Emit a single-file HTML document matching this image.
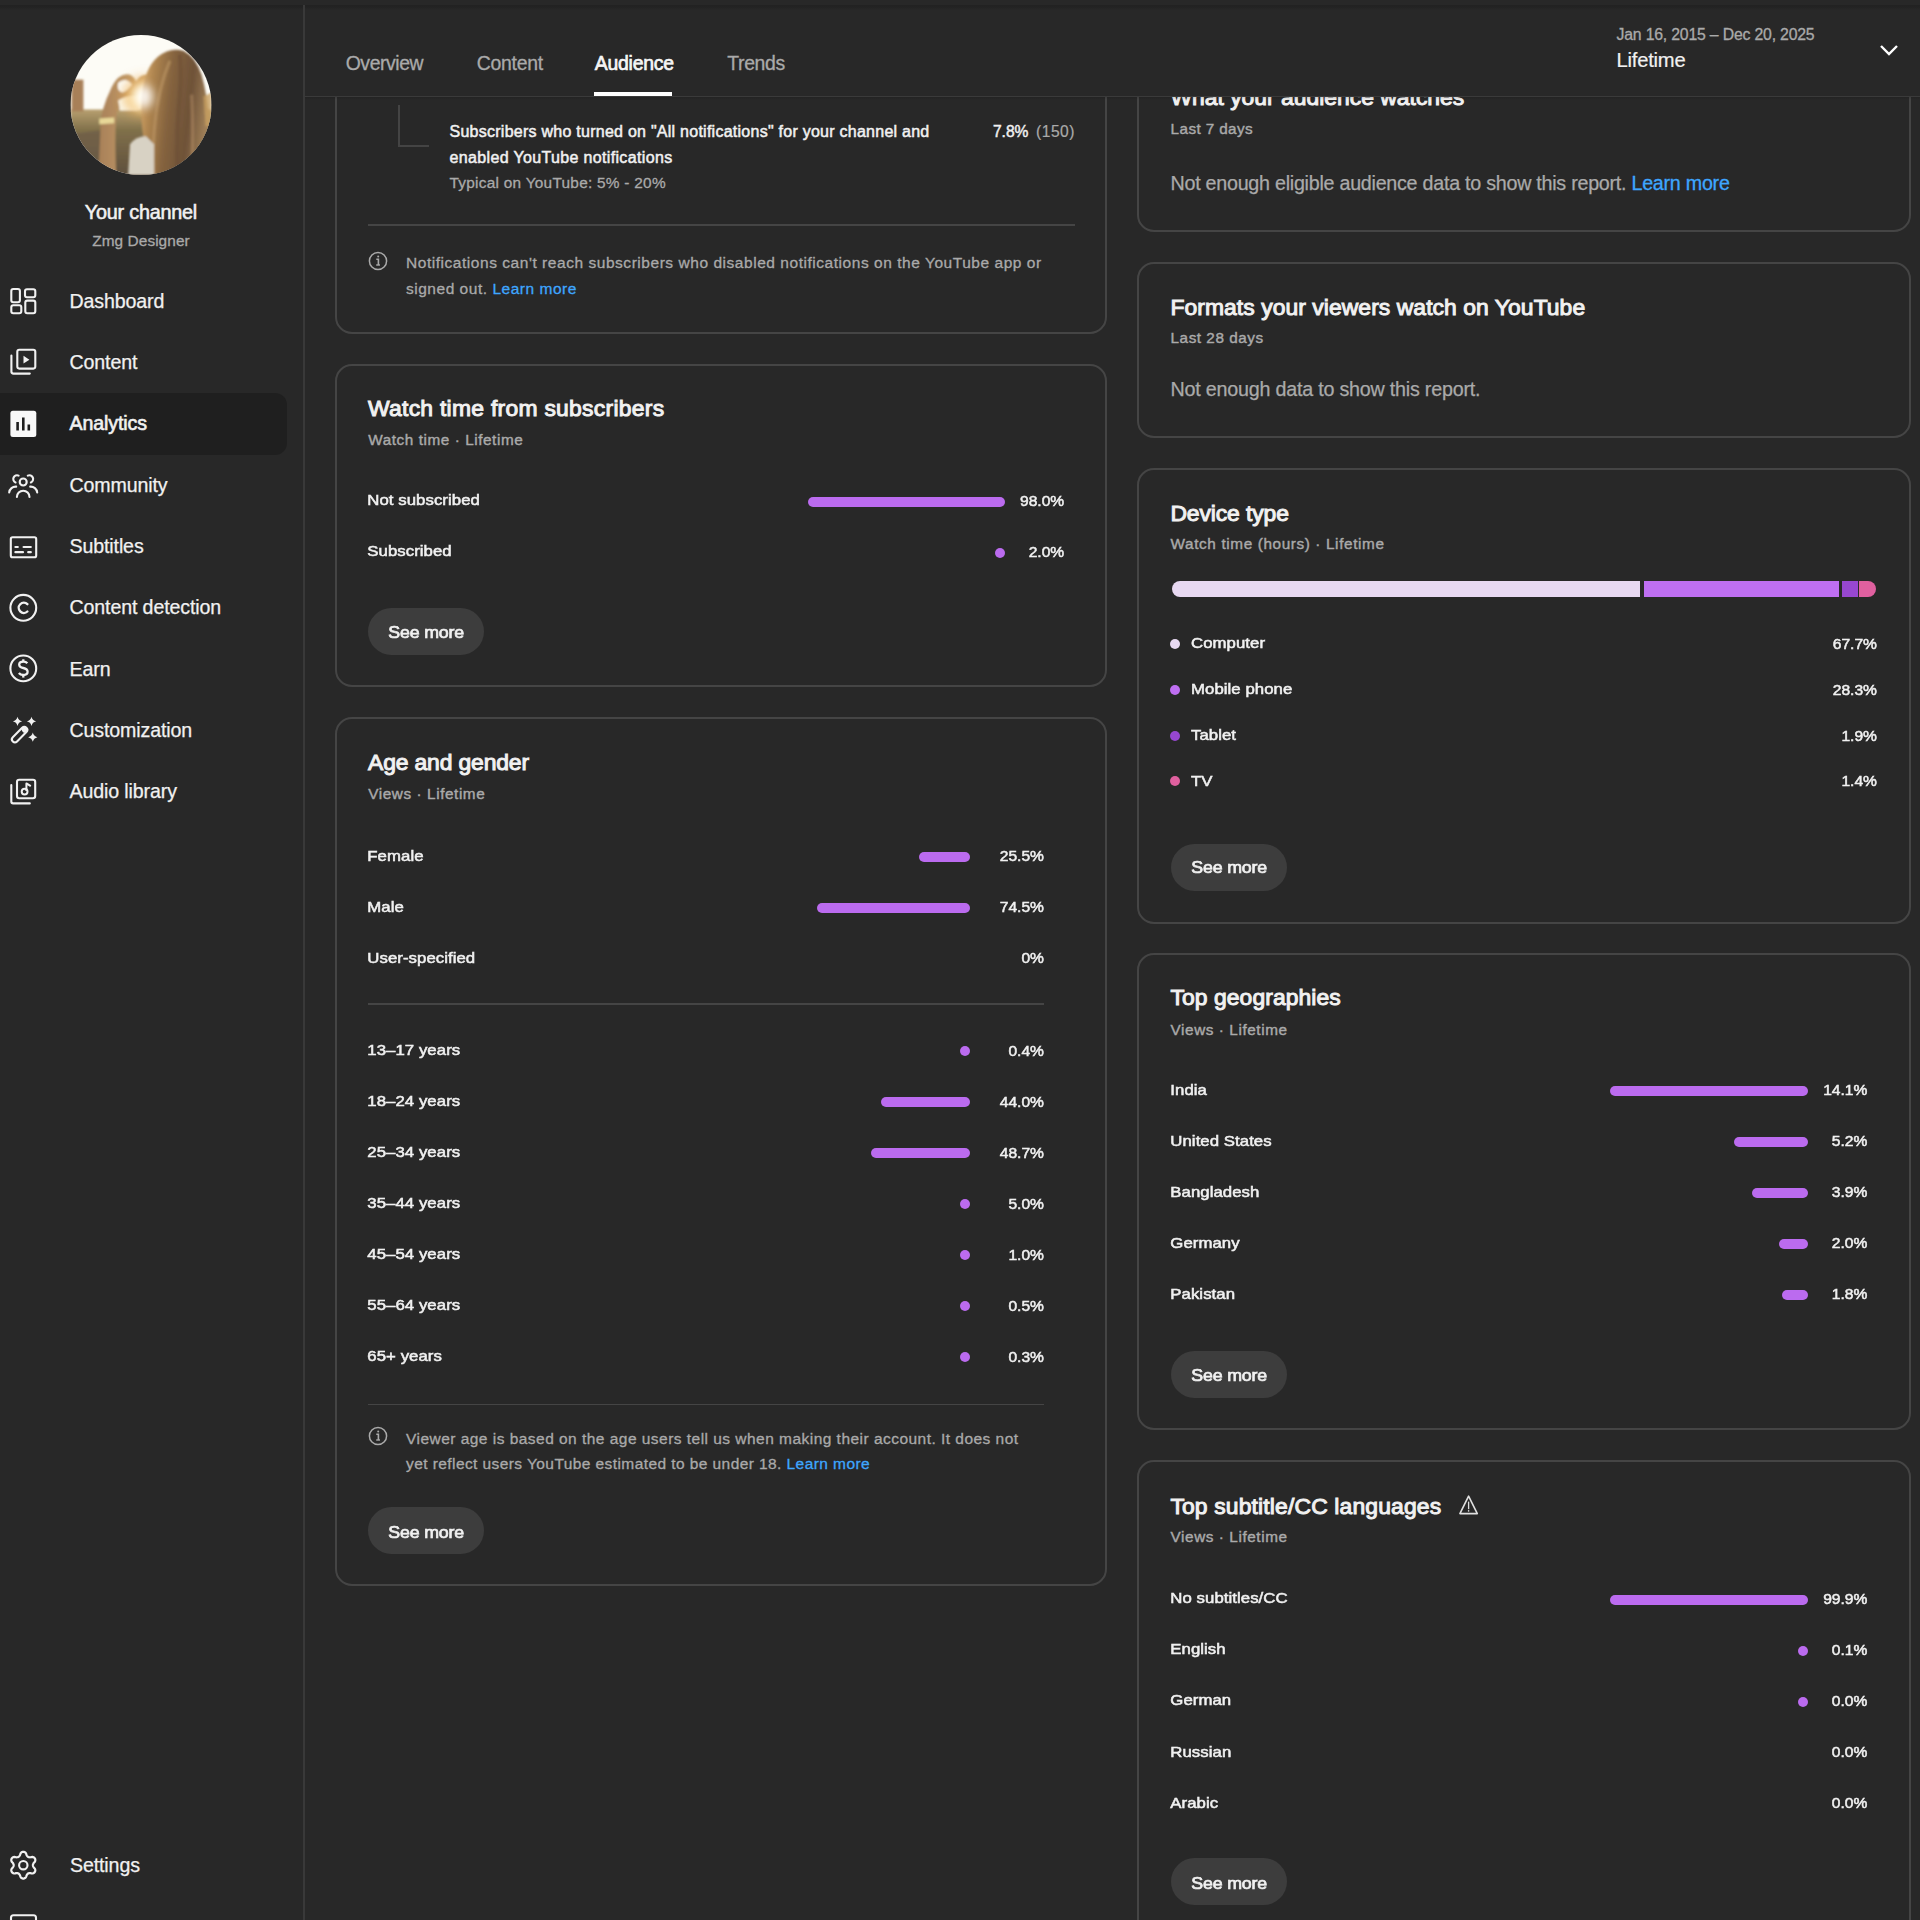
<!DOCTYPE html>
<html><head><meta charset="utf-8">
<style>
*{margin:0;padding:0;box-sizing:border-box}
html,body{width:1920px;height:1920px;overflow:hidden;background:#282828;font-family:"Liberation Sans",sans-serif;color:#f1f1f1}
.a{position:absolute;white-space:nowrap}
.card{position:absolute;border:2px solid #454545;border-radius:17px}
.bar{position:absolute;height:10px;border-radius:5px;background:#bb6bef}
.dot{position:absolute;width:10px;height:10px;border-radius:50%;background:#bb6bef}
.btn{position:absolute;width:116px;height:46px;border-radius:23px;background:#3d3d3d}
svg{position:absolute;overflow:visible}
</style></head><body>

<div class="a" style="left:303.2px;top:5px;width:2px;height:1915px;background:#393939;"></div>
<div class="a" style="left:0px;top:393px;width:287px;height:62px;background:#1f1f1f;border-radius:0 12px 12px 0;"></div>
<svg style="left:70px;top:34.5px" width="142" height="140" viewBox="0 0 142 141">
<defs><clipPath id="cp"><ellipse cx="71" cy="70.5" rx="71" ry="70.5"/></clipPath>
<filter id="bl" x="-20%" y="-20%" width="140%" height="140%"><feGaussianBlur stdDeviation="1.3"/></filter>
<filter id="bl2" x="-50%" y="-50%" width="200%" height="200%"><feGaussianBlur stdDeviation="5"/></filter>
<radialGradient id="sun" cx="0.5" cy="0.5" r="0.5"><stop offset="0" stop-color="#ffffff"/><stop offset="0.25" stop-color="#fff6c8"/><stop offset="0.55" stop-color="#f6c060" stop-opacity="0.8"/><stop offset="1" stop-color="#e09040" stop-opacity="0"/></radialGradient>
<linearGradient id="hair" x1="0" y1="0" x2="1" y2="0.2"><stop offset="0" stop-color="#e0b070"/><stop offset="0.2" stop-color="#b08650"/><stop offset="0.45" stop-color="#86643f"/><stop offset="0.75" stop-color="#6e5238"/><stop offset="1" stop-color="#a08058"/></linearGradient>
<linearGradient id="gnd" x1="0" y1="0" x2="0" y2="1"><stop offset="0" stop-color="#b8a070"/><stop offset="0.3" stop-color="#80704a"/><stop offset="1" stop-color="#5c4c3c"/></linearGradient>
<linearGradient id="arm" x1="0" y1="0" x2="1" y2="0"><stop offset="0" stop-color="#a88058"/><stop offset="1" stop-color="#d0a870"/></linearGradient>
</defs>
<g clip-path="url(#cp)">
<rect x="0" y="0" width="142" height="141" fill="#fdfcf6"/>
<g filter="url(#bl)">
<rect x="0" y="75" width="142" height="70" fill="url(#gnd)"/>
<rect x="1" y="45" width="12" height="32" fill="#a88058"/>
<path d="M0 100 L30 96 L30 141 L0 141 Z" fill="#6a5a48" opacity="0.6"/>
<path d="M28 141 L30 100 Q30 84 33 74 Q36 64 40 56 Q43 48 48 43 Q54 38 60 40 Q65 43 66 47 Q70 40 76 40 Q82 42 80 50 Q76 56 70 60 Q64 64 56 68 Q50 72 47 78 Q44 90 46 141 Z" fill="url(#arm)"/>
<path d="M48 48 Q56 42 62 50 Q58 56 52 58 Q46 56 48 48 Z" fill="#fdfcf6"/>
<path d="M48 66 Q58 60 68 62 L68 76 L50 76 Z" fill="#fdfcf0"/>
<path d="M29 84 L44 83 L44 89 L29 90 Z" fill="#e8d898"/>
</g>
<ellipse cx="74" cy="62" rx="26" ry="24" fill="url(#sun)" filter="url(#bl2)"/>
<g filter="url(#bl)">
<path d="M76 141 L74 108 Q70 84 72 62 Q74 34 88 22 Q100 12 114 16 Q126 22 132 40 Q138 60 140 90 Q142 120 142 141 Z" fill="url(#hair)"/>
<path d="M84 141 Q82 110 86 80 Q90 50 100 26" fill="none" stroke="#c09a68" stroke-width="3" opacity="0.6"/>
<path d="M108 141 Q106 100 110 60 Q112 36 110 20" fill="none" stroke="#6a4c34" stroke-width="4" opacity="0.5"/>
<path d="M122 141 Q124 100 122 60" fill="none" stroke="#b89068" stroke-width="3" opacity="0.5"/>
<path d="M58 141 L60 110 Q66 102 76 102 L84 110 L84 141 Z" fill="#d8d2c4"/>
<path d="M134 62 L142 58 L142 92 L136 92 Z" fill="#c8a060" opacity="0.8"/>
</g>
<ellipse cx="74" cy="62" rx="9" ry="12" fill="#ffffff" filter="url(#bl2)" opacity="0.9"/>
</g></svg>
<div class="a" style="left:84.85px;top:198.94px;font-size:19.8px;line-height:26px;color:#f1f1f1;letter-spacing:-0.214px;-webkit-text-stroke:0.55px #f1f1f1;">Your channel</div>
<div class="a" style="left:92.25px;top:230.66px;font-size:15.4px;line-height:20px;color:#aaaaaa;letter-spacing:0.066px;-webkit-text-stroke:0.3px #aaa;">Zmg Designer</div>
<div class="a" style="left:69.50px;top:288.70px;font-size:19.6px;line-height:25px;color:#f1f1f1;letter-spacing:-0.12px;-webkit-text-stroke:0.25px #f1f1f1;">Dashboard</div>
<div class="a" style="left:69.50px;top:350.00px;font-size:19.6px;line-height:25px;color:#f1f1f1;letter-spacing:-0.12px;-webkit-text-stroke:0.25px #f1f1f1;">Content</div>
<div class="a" style="left:69.50px;top:411.30px;font-size:19.6px;line-height:25px;color:#f1f1f1;letter-spacing:-0.12px;-webkit-text-stroke:0.6px #f1f1f1;">Analytics</div>
<div class="a" style="left:69.50px;top:472.60px;font-size:19.6px;line-height:25px;color:#f1f1f1;letter-spacing:-0.12px;-webkit-text-stroke:0.25px #f1f1f1;">Community</div>
<div class="a" style="left:69.50px;top:533.90px;font-size:19.6px;line-height:25px;color:#f1f1f1;letter-spacing:-0.12px;-webkit-text-stroke:0.25px #f1f1f1;">Subtitles</div>
<div class="a" style="left:69.50px;top:595.20px;font-size:19.6px;line-height:25px;color:#f1f1f1;letter-spacing:-0.12px;-webkit-text-stroke:0.25px #f1f1f1;">Content detection</div>
<div class="a" style="left:69.50px;top:656.50px;font-size:19.6px;line-height:25px;color:#f1f1f1;letter-spacing:-0.12px;-webkit-text-stroke:0.25px #f1f1f1;">Earn</div>
<div class="a" style="left:69.50px;top:717.80px;font-size:19.6px;line-height:25px;color:#f1f1f1;letter-spacing:-0.12px;-webkit-text-stroke:0.25px #f1f1f1;">Customization</div>
<div class="a" style="left:69.50px;top:779.10px;font-size:19.6px;line-height:25px;color:#f1f1f1;letter-spacing:-0.12px;-webkit-text-stroke:0.25px #f1f1f1;">Audio library</div>
<div class="a" style="left:70.00px;top:1852.70px;font-size:19.6px;line-height:25px;color:#f1f1f1;letter-spacing:-0.12px;-webkit-text-stroke:0.25px #f1f1f1;">Settings</div>
<div class="a" style="left:70.00px;top:1916.20px;font-size:19.6px;line-height:25px;color:#f1f1f1;letter-spacing:-0.12px;-webkit-text-stroke:0.25px #f1f1f1;">Send feedback</div>
<div class="card" style="left:335.05px;top:-101.00px;width:772.05px;height:435.00px"></div>
<div class="a" style="left:398px;top:105px;width:31px;height:42px;border-left:2px solid #444;border-bottom:2px solid #444"></div>
<div class="a" style="left:449.50px;top:121.45px;font-size:16px;line-height:21px;color:#f1f1f1;letter-spacing:0.255px;-webkit-text-stroke:0.5px #f1f1f1;">Subscribers who turned on "All notifications" for your channel and</div>
<div class="a" style="left:449.50px;top:146.75px;font-size:16px;line-height:21px;color:#f1f1f1;letter-spacing:0.348px;-webkit-text-stroke:0.5px #f1f1f1;">enabled YouTube notifications</div>
<div class="a" style="left:449.50px;top:173.16px;font-size:15.4px;line-height:20px;color:#aaaaaa;letter-spacing:0.261px;-webkit-text-stroke:0.3px #aaaaaa;">Typical on YouTube: 5% - 20%</div>
<div class="a" style="left:992.94px;top:122.09px;font-size:15.6px;line-height:20px;color:#f1f1f1;-webkit-text-stroke:0.45px #f1f1f1;">7.8%</div>
<div class="a" style="left:1036.00px;top:122.09px;font-size:15.6px;line-height:20px;color:#aaaaaa;letter-spacing:0.516px;-webkit-text-stroke:0.2px #aaaaaa;">(150)</div>
<div class="a" style="left:368px;top:224px;width:707px;height:1.8px;background:#454545;"></div>
<div class="a" style="left:406.00px;top:252.93px;font-size:15.5px;line-height:20px;color:#aaaaaa;letter-spacing:0.541px;-webkit-text-stroke:0.3px #aaaaaa;">Notifications can't reach subscribers who disabled notifications on the YouTube app or</div>
<div class="a" style="left:406.00px;top:278.63px;font-size:15.5px;line-height:20px;color:#aaaaaa;letter-spacing:0.520px;-webkit-text-stroke:0.3px #aaaaaa;">signed out. <span style="color:#3ea6ff;-webkit-text-stroke:0.3px #3ea6ff">Learn more</span></div>
<div class="card" style="left:335.05px;top:364.00px;width:772.05px;height:323.10px"></div>
<div class="a" style="left:368.00px;top:392.66px;font-size:22.9px;line-height:30px;color:#f1f1f1;letter-spacing:0.267px;-webkit-text-stroke:1.0px #f1f1f1;">Watch time from subscribers</div>
<div class="a" style="left:368.30px;top:430.40px;font-size:15.3px;line-height:20px;color:#aaaaaa;letter-spacing:0.566px;-webkit-text-stroke:0.4px #aaaaaa;">Watch time · Lifetime</div>
<div class="a" style="left:367.30px;top:489.28px;font-size:16.8px;line-height:22px;color:#f1f1f1;transform:scaleY(0.87);transform-origin:0 16.82px;letter-spacing:0.050px;-webkit-text-stroke:0.6px #f1f1f1;">Not subscribed</div>
<div class="bar" style="left:808px;top:496.60px;width:197.00px"></div>
<div class="a" style="left:1019.97px;top:490.99px;font-size:15.6px;line-height:20px;color:#f1f1f1;transform:scaleY(0.88);transform-origin:0 15.41px;-webkit-text-stroke:0.55px #f1f1f1;">98.0%</div>
<div class="a" style="left:367.30px;top:540.28px;font-size:16.8px;line-height:22px;color:#f1f1f1;transform:scaleY(0.87);transform-origin:0 16.82px;letter-spacing:0.050px;-webkit-text-stroke:0.6px #f1f1f1;">Subscribed</div>
<div class="dot" style="left:995.00px;top:547.60px;"></div>
<div class="a" style="left:1028.64px;top:541.99px;font-size:15.6px;line-height:20px;color:#f1f1f1;transform:scaleY(0.88);transform-origin:0 15.41px;-webkit-text-stroke:0.55px #f1f1f1;">2.0%</div>
<div class="btn" style="left:367.7px;top:608px;height:47.3px;border-radius:24px"></div>
<div class="a" style="left:388.20px;top:621.03px;font-size:17.8px;line-height:23px;color:#f1f1f1;transform:scaleY(0.93);transform-origin:0 17.67px;letter-spacing:-0.147px;-webkit-text-stroke:0.75px #f1f1f1;">See more</div>
<div class="card" style="left:335.05px;top:717.10px;width:772.05px;height:869.30px"></div>
<div class="a" style="left:368.00px;top:747.26px;font-size:22.9px;line-height:30px;color:#f1f1f1;letter-spacing:-0.142px;-webkit-text-stroke:1.0px #f1f1f1;">Age and gender</div>
<div class="a" style="left:368.30px;top:783.50px;font-size:15.3px;line-height:20px;color:#aaaaaa;letter-spacing:0.581px;-webkit-text-stroke:0.4px #aaaaaa;">Views · Lifetime</div>
<div class="a" style="left:367.30px;top:844.58px;font-size:16.8px;line-height:22px;color:#f1f1f1;transform:scaleY(0.87);transform-origin:0 16.82px;letter-spacing:0.050px;-webkit-text-stroke:0.6px #f1f1f1;">Female</div>
<div class="bar" style="left:919px;top:851.90px;width:50.50px"></div>
<div class="a" style="left:999.77px;top:846.29px;font-size:15.6px;line-height:20px;color:#f1f1f1;transform:scaleY(0.88);transform-origin:0 15.41px;-webkit-text-stroke:0.55px #f1f1f1;">25.5%</div>
<div class="a" style="left:367.30px;top:895.58px;font-size:16.8px;line-height:22px;color:#f1f1f1;transform:scaleY(0.87);transform-origin:0 16.82px;letter-spacing:0.050px;-webkit-text-stroke:0.6px #f1f1f1;">Male</div>
<div class="bar" style="left:817px;top:902.90px;width:152.50px"></div>
<div class="a" style="left:999.77px;top:897.29px;font-size:15.6px;line-height:20px;color:#f1f1f1;transform:scaleY(0.88);transform-origin:0 15.41px;-webkit-text-stroke:0.55px #f1f1f1;">74.5%</div>
<div class="a" style="left:367.30px;top:946.58px;font-size:16.8px;line-height:22px;color:#f1f1f1;transform:scaleY(0.87);transform-origin:0 16.82px;letter-spacing:0.050px;-webkit-text-stroke:0.6px #f1f1f1;">User-specified</div>
<div class="a" style="left:1021.45px;top:948.29px;font-size:15.6px;line-height:20px;color:#f1f1f1;transform:scaleY(0.88);transform-origin:0 15.41px;-webkit-text-stroke:0.55px #f1f1f1;">0%</div>
<div class="a" style="left:367.5px;top:1003.1px;width:676px;height:1.8px;background:#454545;"></div>
<div class="a" style="left:367.30px;top:1038.98px;font-size:16.8px;line-height:22px;color:#f1f1f1;transform:scaleY(0.87);transform-origin:0 16.82px;letter-spacing:0.050px;-webkit-text-stroke:0.6px #f1f1f1;">13–17 years</div>
<div class="dot" style="left:959.50px;top:1046.30px;"></div>
<div class="a" style="left:1008.44px;top:1040.69px;font-size:15.6px;line-height:20px;color:#f1f1f1;transform:scaleY(0.88);transform-origin:0 15.41px;-webkit-text-stroke:0.55px #f1f1f1;">0.4%</div>
<div class="a" style="left:367.30px;top:1089.98px;font-size:16.8px;line-height:22px;color:#f1f1f1;transform:scaleY(0.87);transform-origin:0 16.82px;letter-spacing:0.050px;-webkit-text-stroke:0.6px #f1f1f1;">18–24 years</div>
<div class="bar" style="left:880.5px;top:1097.30px;width:89.00px"></div>
<div class="a" style="left:999.77px;top:1091.69px;font-size:15.6px;line-height:20px;color:#f1f1f1;transform:scaleY(0.88);transform-origin:0 15.41px;-webkit-text-stroke:0.55px #f1f1f1;">44.0%</div>
<div class="a" style="left:367.30px;top:1140.98px;font-size:16.8px;line-height:22px;color:#f1f1f1;transform:scaleY(0.87);transform-origin:0 16.82px;letter-spacing:0.050px;-webkit-text-stroke:0.6px #f1f1f1;">25–34 years</div>
<div class="bar" style="left:870.5px;top:1148.30px;width:99.00px"></div>
<div class="a" style="left:999.77px;top:1142.69px;font-size:15.6px;line-height:20px;color:#f1f1f1;transform:scaleY(0.88);transform-origin:0 15.41px;-webkit-text-stroke:0.55px #f1f1f1;">48.7%</div>
<div class="a" style="left:367.30px;top:1191.98px;font-size:16.8px;line-height:22px;color:#f1f1f1;transform:scaleY(0.87);transform-origin:0 16.82px;letter-spacing:0.050px;-webkit-text-stroke:0.6px #f1f1f1;">35–44 years</div>
<div class="dot" style="left:959.50px;top:1199.30px;"></div>
<div class="a" style="left:1008.44px;top:1193.69px;font-size:15.6px;line-height:20px;color:#f1f1f1;transform:scaleY(0.88);transform-origin:0 15.41px;-webkit-text-stroke:0.55px #f1f1f1;">5.0%</div>
<div class="a" style="left:367.30px;top:1242.98px;font-size:16.8px;line-height:22px;color:#f1f1f1;transform:scaleY(0.87);transform-origin:0 16.82px;letter-spacing:0.050px;-webkit-text-stroke:0.6px #f1f1f1;">45–54 years</div>
<div class="dot" style="left:959.50px;top:1250.30px;"></div>
<div class="a" style="left:1008.44px;top:1244.69px;font-size:15.6px;line-height:20px;color:#f1f1f1;transform:scaleY(0.88);transform-origin:0 15.41px;-webkit-text-stroke:0.55px #f1f1f1;">1.0%</div>
<div class="a" style="left:367.30px;top:1293.98px;font-size:16.8px;line-height:22px;color:#f1f1f1;transform:scaleY(0.87);transform-origin:0 16.82px;letter-spacing:0.050px;-webkit-text-stroke:0.6px #f1f1f1;">55–64 years</div>
<div class="dot" style="left:959.50px;top:1301.30px;"></div>
<div class="a" style="left:1008.44px;top:1295.69px;font-size:15.6px;line-height:20px;color:#f1f1f1;transform:scaleY(0.88);transform-origin:0 15.41px;-webkit-text-stroke:0.55px #f1f1f1;">0.5%</div>
<div class="a" style="left:367.30px;top:1344.98px;font-size:16.8px;line-height:22px;color:#f1f1f1;transform:scaleY(0.87);transform-origin:0 16.82px;letter-spacing:0.050px;-webkit-text-stroke:0.6px #f1f1f1;">65+ years</div>
<div class="dot" style="left:959.50px;top:1352.30px;"></div>
<div class="a" style="left:1008.44px;top:1346.69px;font-size:15.6px;line-height:20px;color:#f1f1f1;transform:scaleY(0.88);transform-origin:0 15.41px;-webkit-text-stroke:0.55px #f1f1f1;">0.3%</div>
<div class="a" style="left:367.5px;top:1403.6px;width:676px;height:1.8px;background:#454545;"></div>
<div class="a" style="left:406.00px;top:1428.63px;font-size:15.5px;line-height:20px;color:#aaaaaa;letter-spacing:0.470px;-webkit-text-stroke:0.3px #aaaaaa;">Viewer age is based on the age users tell us when making their account. It does not</div>
<div class="a" style="left:406.00px;top:1454.13px;font-size:15.5px;line-height:20px;color:#aaaaaa;letter-spacing:0.420px;-webkit-text-stroke:0.3px #aaaaaa;">yet reflect users YouTube estimated to be under 18. <span style="color:#3ea6ff;-webkit-text-stroke:0.3px #3ea6ff">Learn more</span></div>
<div class="btn" style="left:367.7px;top:1507px;height:47.3px;border-radius:24px"></div>
<div class="a" style="left:388.20px;top:1520.53px;font-size:17.8px;line-height:23px;color:#f1f1f1;transform:scaleY(0.93);transform-origin:0 17.67px;letter-spacing:-0.147px;-webkit-text-stroke:0.75px #f1f1f1;">See more</div>
<div class="card" style="left:1137px;top:-101.00px;width:773.7px;height:332.80px"></div>
<div class="a" style="left:1170.40px;top:81.96px;font-size:22.9px;line-height:30px;color:#f1f1f1;letter-spacing:-0.002px;-webkit-text-stroke:1.0px #f1f1f1;">What your audience watches</div>
<div class="a" style="left:1170.60px;top:119.10px;font-size:15.3px;line-height:20px;color:#aaaaaa;letter-spacing:0.386px;-webkit-text-stroke:0.4px #aaaaaa;">Last 7 days</div>
<div class="a" style="left:1170.50px;top:169.77px;font-size:19.7px;line-height:26px;color:#aaaaaa;letter-spacing:-0.255px;-webkit-text-stroke:0.25px #aaaaaa;">Not enough eligible audience data to show this report. <span style="color:#3ea6ff;-webkit-text-stroke:0.3px #3ea6ff">Learn more</span></div>
<div class="card" style="left:1137px;top:261.70px;width:773.7px;height:176.30px"></div>
<div class="a" style="left:1170.40px;top:292.26px;font-size:22.9px;line-height:30px;color:#f1f1f1;letter-spacing:0.058px;-webkit-text-stroke:1.0px #f1f1f1;">Formats your viewers watch on YouTube</div>
<div class="a" style="left:1170.60px;top:328.10px;font-size:15.3px;line-height:20px;color:#aaaaaa;letter-spacing:0.520px;-webkit-text-stroke:0.4px #aaaaaa;">Last 28 days</div>
<div class="a" style="left:1170.50px;top:375.77px;font-size:19.7px;line-height:26px;color:#aaaaaa;letter-spacing:-0.211px;-webkit-text-stroke:0.25px #aaaaaa;">Not enough data to show this report.</div>
<div class="card" style="left:1137px;top:467.75px;width:773.7px;height:455.75px"></div>
<div class="a" style="left:1170.40px;top:497.61px;font-size:22.9px;line-height:30px;color:#f1f1f1;letter-spacing:-0.104px;-webkit-text-stroke:1.0px #f1f1f1;">Device type</div>
<div class="a" style="left:1170.60px;top:534.15px;font-size:15.3px;line-height:20px;color:#aaaaaa;letter-spacing:0.626px;-webkit-text-stroke:0.4px #aaaaaa;">Watch time (hours) · Lifetime</div>
<div class="a" style="left:1172px;top:581px;width:704px;height:16px;border-radius:8px;overflow:hidden;background:#282828"><div class="a" style="left:0;top:0;width:468px;height:16px;background:#e8d9f2"></div><div class="a" style="left:471.5px;top:0;width:195px;height:16px;background:#bf6ff2"></div><div class="a" style="left:670px;top:0;width:15.5px;height:16px;background:#9747d0"></div><div class="a" style="left:687px;top:0;width:17px;height:16px;background:#e0609f"></div></div>
<div class="dot" style="left:1170.30px;top:639.30px;background:#e8d9f2;"></div>
<div class="a" style="left:1191.00px;top:632.48px;font-size:16.8px;line-height:22px;color:#f1f1f1;transform:scaleY(0.87);transform-origin:0 16.82px;letter-spacing:0.050px;-webkit-text-stroke:0.6px #f1f1f1;">Computer</div>
<div class="a" style="left:1832.77px;top:634.19px;font-size:15.6px;line-height:20px;color:#f1f1f1;transform:scaleY(0.88);transform-origin:0 15.41px;-webkit-text-stroke:0.55px #f1f1f1;">67.7%</div>
<div class="dot" style="left:1170.30px;top:685.00px;background:#bf6ff2;"></div>
<div class="a" style="left:1191.00px;top:678.18px;font-size:16.8px;line-height:22px;color:#f1f1f1;transform:scaleY(0.87);transform-origin:0 16.82px;letter-spacing:0.050px;-webkit-text-stroke:0.6px #f1f1f1;">Mobile phone</div>
<div class="a" style="left:1832.77px;top:679.89px;font-size:15.6px;line-height:20px;color:#f1f1f1;transform:scaleY(0.88);transform-origin:0 15.41px;-webkit-text-stroke:0.55px #f1f1f1;">28.3%</div>
<div class="dot" style="left:1170.30px;top:730.70px;background:#9747d0;"></div>
<div class="a" style="left:1191.00px;top:723.88px;font-size:16.8px;line-height:22px;color:#f1f1f1;transform:scaleY(0.87);transform-origin:0 16.82px;letter-spacing:0.050px;-webkit-text-stroke:0.6px #f1f1f1;">Tablet</div>
<div class="a" style="left:1841.44px;top:725.59px;font-size:15.6px;line-height:20px;color:#f1f1f1;transform:scaleY(0.88);transform-origin:0 15.41px;-webkit-text-stroke:0.55px #f1f1f1;">1.9%</div>
<div class="dot" style="left:1170.30px;top:776.40px;background:#e0609f;"></div>
<div class="a" style="left:1191.00px;top:769.58px;font-size:16.8px;line-height:22px;color:#f1f1f1;transform:scaleY(0.87);transform-origin:0 16.82px;letter-spacing:0.050px;-webkit-text-stroke:0.6px #f1f1f1;">TV</div>
<div class="a" style="left:1841.44px;top:771.29px;font-size:15.6px;line-height:20px;color:#f1f1f1;transform:scaleY(0.88);transform-origin:0 15.41px;-webkit-text-stroke:0.55px #f1f1f1;">1.4%</div>
<div class="btn" style="left:1170.7px;top:844px;height:47.3px;border-radius:24px"></div>
<div class="a" style="left:1191.20px;top:856.03px;font-size:17.8px;line-height:23px;color:#f1f1f1;transform:scaleY(0.93);transform-origin:0 17.67px;letter-spacing:-0.147px;-webkit-text-stroke:0.75px #f1f1f1;">See more</div>
<div class="card" style="left:1137px;top:953.40px;width:773.7px;height:476.60px"></div>
<div class="a" style="left:1170.40px;top:982.36px;font-size:22.9px;line-height:30px;color:#f1f1f1;letter-spacing:0.077px;-webkit-text-stroke:1.0px #f1f1f1;">Top geographies</div>
<div class="a" style="left:1170.60px;top:1019.80px;font-size:15.3px;line-height:20px;color:#aaaaaa;letter-spacing:0.581px;-webkit-text-stroke:0.4px #aaaaaa;">Views · Lifetime</div>
<div class="a" style="left:1170.30px;top:1078.58px;font-size:16.8px;line-height:22px;color:#f1f1f1;transform:scaleY(0.87);transform-origin:0 16.82px;letter-spacing:0.050px;-webkit-text-stroke:0.6px #f1f1f1;">India</div>
<div class="bar" style="left:1609.5px;top:1085.90px;width:198.90px"></div>
<div class="a" style="left:1823.17px;top:1080.29px;font-size:15.6px;line-height:20px;color:#f1f1f1;transform:scaleY(0.88);transform-origin:0 15.41px;-webkit-text-stroke:0.55px #f1f1f1;">14.1%</div>
<div class="a" style="left:1170.30px;top:1129.58px;font-size:16.8px;line-height:22px;color:#f1f1f1;transform:scaleY(0.87);transform-origin:0 16.82px;letter-spacing:0.050px;-webkit-text-stroke:0.6px #f1f1f1;">United States</div>
<div class="bar" style="left:1734px;top:1136.90px;width:74.40px"></div>
<div class="a" style="left:1831.84px;top:1131.29px;font-size:15.6px;line-height:20px;color:#f1f1f1;transform:scaleY(0.88);transform-origin:0 15.41px;-webkit-text-stroke:0.55px #f1f1f1;">5.2%</div>
<div class="a" style="left:1170.30px;top:1180.58px;font-size:16.8px;line-height:22px;color:#f1f1f1;transform:scaleY(0.87);transform-origin:0 16.82px;letter-spacing:0.050px;-webkit-text-stroke:0.6px #f1f1f1;">Bangladesh</div>
<div class="bar" style="left:1752px;top:1187.90px;width:56.40px"></div>
<div class="a" style="left:1831.84px;top:1182.29px;font-size:15.6px;line-height:20px;color:#f1f1f1;transform:scaleY(0.88);transform-origin:0 15.41px;-webkit-text-stroke:0.55px #f1f1f1;">3.9%</div>
<div class="a" style="left:1170.30px;top:1231.58px;font-size:16.8px;line-height:22px;color:#f1f1f1;transform:scaleY(0.87);transform-origin:0 16.82px;letter-spacing:0.050px;-webkit-text-stroke:0.6px #f1f1f1;">Germany</div>
<div class="bar" style="left:1779px;top:1238.90px;width:29.40px"></div>
<div class="a" style="left:1831.84px;top:1233.29px;font-size:15.6px;line-height:20px;color:#f1f1f1;transform:scaleY(0.88);transform-origin:0 15.41px;-webkit-text-stroke:0.55px #f1f1f1;">2.0%</div>
<div class="a" style="left:1170.30px;top:1282.58px;font-size:16.8px;line-height:22px;color:#f1f1f1;transform:scaleY(0.87);transform-origin:0 16.82px;letter-spacing:0.050px;-webkit-text-stroke:0.6px #f1f1f1;">Pakistan</div>
<div class="bar" style="left:1782px;top:1289.90px;width:26.40px"></div>
<div class="a" style="left:1831.84px;top:1284.29px;font-size:15.6px;line-height:20px;color:#f1f1f1;transform:scaleY(0.88);transform-origin:0 15.41px;-webkit-text-stroke:0.55px #f1f1f1;">1.8%</div>
<div class="btn" style="left:1170.7px;top:1350.5px;height:47.3px;border-radius:24px"></div>
<div class="a" style="left:1191.20px;top:1364.03px;font-size:17.8px;line-height:23px;color:#f1f1f1;transform:scaleY(0.93);transform-origin:0 17.67px;letter-spacing:-0.147px;-webkit-text-stroke:0.75px #f1f1f1;">See more</div>
<div class="card" style="left:1137px;top:1459.60px;width:773.7px;height:641.40px"></div>
<div class="a" style="left:1170.40px;top:1490.86px;font-size:22.9px;line-height:30px;color:#f1f1f1;letter-spacing:0.147px;-webkit-text-stroke:1.0px #f1f1f1;">Top subtitle/CC languages</div>
<div class="a" style="left:1170.60px;top:1526.80px;font-size:15.3px;line-height:20px;color:#aaaaaa;letter-spacing:0.581px;-webkit-text-stroke:0.4px #aaaaaa;">Views · Lifetime</div>
<div class="a" style="left:1170.30px;top:1587.28px;font-size:16.8px;line-height:22px;color:#f1f1f1;transform:scaleY(0.87);transform-origin:0 16.82px;letter-spacing:0.050px;-webkit-text-stroke:0.6px #f1f1f1;">No subtitles/CC</div>
<div class="bar" style="left:1609.5px;top:1594.60px;width:198.90px"></div>
<div class="a" style="left:1823.17px;top:1588.99px;font-size:15.6px;line-height:20px;color:#f1f1f1;transform:scaleY(0.88);transform-origin:0 15.41px;-webkit-text-stroke:0.55px #f1f1f1;">99.9%</div>
<div class="a" style="left:1170.30px;top:1638.38px;font-size:16.8px;line-height:22px;color:#f1f1f1;transform:scaleY(0.87);transform-origin:0 16.82px;letter-spacing:0.050px;-webkit-text-stroke:0.6px #f1f1f1;">English</div>
<div class="dot" style="left:1797.50px;top:1645.70px;"></div>
<div class="a" style="left:1831.84px;top:1640.09px;font-size:15.6px;line-height:20px;color:#f1f1f1;transform:scaleY(0.88);transform-origin:0 15.41px;-webkit-text-stroke:0.55px #f1f1f1;">0.1%</div>
<div class="a" style="left:1170.30px;top:1689.48px;font-size:16.8px;line-height:22px;color:#f1f1f1;transform:scaleY(0.87);transform-origin:0 16.82px;letter-spacing:0.050px;-webkit-text-stroke:0.6px #f1f1f1;">German</div>
<div class="dot" style="left:1797.50px;top:1696.80px;"></div>
<div class="a" style="left:1831.84px;top:1691.19px;font-size:15.6px;line-height:20px;color:#f1f1f1;transform:scaleY(0.88);transform-origin:0 15.41px;-webkit-text-stroke:0.55px #f1f1f1;">0.0%</div>
<div class="a" style="left:1170.30px;top:1740.58px;font-size:16.8px;line-height:22px;color:#f1f1f1;transform:scaleY(0.87);transform-origin:0 16.82px;letter-spacing:0.050px;-webkit-text-stroke:0.6px #f1f1f1;">Russian</div>
<div class="a" style="left:1831.84px;top:1742.29px;font-size:15.6px;line-height:20px;color:#f1f1f1;transform:scaleY(0.88);transform-origin:0 15.41px;-webkit-text-stroke:0.55px #f1f1f1;">0.0%</div>
<div class="a" style="left:1170.30px;top:1791.68px;font-size:16.8px;line-height:22px;color:#f1f1f1;transform:scaleY(0.87);transform-origin:0 16.82px;letter-spacing:0.050px;-webkit-text-stroke:0.6px #f1f1f1;">Arabic</div>
<div class="a" style="left:1831.84px;top:1793.39px;font-size:15.6px;line-height:20px;color:#f1f1f1;transform:scaleY(0.88);transform-origin:0 15.41px;-webkit-text-stroke:0.55px #f1f1f1;">0.0%</div>
<div class="btn" style="left:1170.7px;top:1858px;height:47.3px;border-radius:24px"></div>
<div class="a" style="left:1191.20px;top:1871.53px;font-size:17.8px;line-height:23px;color:#f1f1f1;transform:scaleY(0.93);transform-origin:0 17.67px;letter-spacing:-0.147px;-webkit-text-stroke:0.75px #f1f1f1;">See more</div>
<svg style="left:0;top:0" width="60" height="1920" viewBox="0 0 60 1920"><g fill="none" stroke="#f1f1f1" stroke-width="2.1" stroke-linecap="round" stroke-linejoin="round"><rect x="11.3" y="289" width="8.6" height="13.2" rx="2"/><rect x="25" y="289.2" width="10.3" height="8" rx="2"/><rect x="11.3" y="305.3" width="10" height="8" rx="2"/><rect x="25.3" y="300.6" width="10" height="12.7" rx="2"/></g><g fill="none" stroke="#f1f1f1" stroke-width="2.1" stroke-linecap="round" stroke-linejoin="round"><rect x="17.3" y="349.8" width="18" height="18.8" rx="2"/><path d="M11.4 355.5 V371.5 Q11.4 373.6 13.5 373.6 H29.8"/></g><path d="M23.5 355.8 L29.4 359.7 L23.5 363.6 Z" fill="#f1f1f1"/><rect x="10.4" y="410.8" width="25.9" height="26.2" rx="2.5" fill="#f8f8f8"/><g stroke="#1f1f1f" stroke-width="2.6" stroke-linecap="butt"><path d="M17.6 422 V430.5"/><path d="M23.3 417.5 V430.5"/><path d="M28.8 424.5 V430.5"/></g><g fill="none" stroke="#f1f1f1" stroke-width="2.1" stroke-linecap="round" stroke-linejoin="round"><circle cx="23.2" cy="482" r="3.5"/><path d="M16.9 497 A6.3 6.3 0 0 1 29.5 497"/><path d="M18.6 475.6 A3.6 3.6 0 1 0 15.5 482.5"/><path d="M27.8 475.6 A3.6 3.6 0 1 1 30.9 482.5"/><path d="M9.2 492.5 A6.5 6.5 0 0 1 16.2 486.6"/><path d="M37.2 492.5 A6.5 6.5 0 0 0 30.2 486.6"/></g><g fill="none" stroke="#f1f1f1" stroke-width="2.1" stroke-linecap="round" stroke-linejoin="round"><rect x="10.8" y="537.3" width="25.4" height="19.9" rx="1.8"/></g><g stroke="#f1f1f1" stroke-width="2.2" stroke-linecap="round"><path d="M15.4 547 H17.8"/><path d="M23.6 547 H30.8"/><path d="M15.4 552.2 H23"/><path d="M28.2 552.2 H30.8"/></g><g fill="none" stroke="#f1f1f1" stroke-width="2.1" stroke-linecap="round" stroke-linejoin="round"><circle cx="23.3" cy="607.8" r="12.9"/><path d="M27.4 604.2 A5.1 5.1 0 1 0 27.4 611.5" stroke-width="2.4"/></g><g fill="none" stroke="#f1f1f1" stroke-width="2.1" stroke-linecap="round" stroke-linejoin="round"><circle cx="23.3" cy="668.4" r="12.9"/></g><g fill="none" stroke="#f1f1f1" stroke-width="2.3" stroke-linecap="butt"><path d="M27.3 663.3 Q26 661.6 23.3 661.6 Q19.2 661.6 19.2 664.6 Q19.2 667.3 23.3 668 Q27.6 668.8 27.6 671.8 Q27.6 675 23.3 675 Q20.3 675 18.9 673"/><path d="M23.3 659.3 V661.6"/><path d="M23.3 675 V677.6"/></g><path d="M17.5 716.6999999999999 Q18.42 720.38 22.1 721.3 Q18.42 722.2199999999999 17.5 725.9 Q16.58 722.2199999999999 12.9 721.3 Q16.58 720.38 17.5 716.6999999999999 Z" fill="#f1f1f1"/><path d="M31.5 716.6999999999999 Q32.42 720.38 36.1 721.3 Q32.42 722.2199999999999 31.5 725.9 Q30.58 722.2199999999999 26.9 721.3 Q30.58 720.38 31.5 716.6999999999999 Z" fill="#f1f1f1"/><path d="M32.8 732.6 Q33.72 736.2800000000001 37.4 737.2 Q33.72 738.12 32.8 741.8000000000001 Q31.879999999999995 738.12 28.199999999999996 737.2 Q31.879999999999995 736.2800000000001 32.8 732.6 Z" fill="#f1f1f1"/><g transform="translate(19.6 734.6) rotate(-45)"><rect x="-9.6" y="-3" width="19.2" height="6" rx="3" fill="none" stroke="#f1f1f1" stroke-width="2.1"/><rect x="4.2" y="-3" width="5.4" height="6" rx="2.6" fill="#f1f1f1"/></g><g fill="none" stroke="#f1f1f1" stroke-width="2.1" stroke-linecap="round" stroke-linejoin="round"><rect x="17" y="779.8" width="18.2" height="18.5" rx="2.2"/><path d="M11.3 785 V801.6 Q11.3 803.4 13.1 803.4 H29.8"/></g><circle cx="24.6" cy="791.6" r="2.9" fill="none" stroke="#f1f1f1" stroke-width="2"/><path d="M26.4 791 V783.4 L30.8 786.2" fill="none" stroke="#f1f1f1" stroke-width="2" stroke-linejoin="round"/><g fill="none" stroke="#f1f1f1" stroke-width="2.1" stroke-linecap="round" stroke-linejoin="round"><path d="M32.90 1865.20 L32.94 1864.78 L33.04 1864.35 L33.22 1863.89 L33.47 1863.41 L33.81 1862.87 L34.41 1862.22 L34.97 1861.52 L35.21 1860.87 L35.30 1860.23 L35.28 1859.61 L35.15 1859.03 L34.90 1858.50 L34.56 1858.02 L34.13 1857.62 L33.61 1857.29 L33.01 1857.06 L32.32 1856.93 L31.43 1857.07 L30.57 1857.27 L29.94 1857.29 L29.39 1857.26 L28.91 1857.19 L28.48 1857.07 L28.10 1856.89 L27.75 1856.64 L27.43 1856.33 L27.13 1855.95 L26.83 1855.49 L26.54 1854.94 L26.28 1854.09 L25.95 1853.25 L25.50 1852.72 L25.00 1852.32 L24.45 1852.03 L23.88 1851.86 L23.30 1851.80 L22.72 1851.86 L22.15 1852.03 L21.60 1852.32 L21.10 1852.72 L20.65 1853.25 L20.32 1854.09 L20.06 1854.94 L19.77 1855.49 L19.47 1855.95 L19.17 1856.33 L18.85 1856.64 L18.50 1856.89 L18.12 1857.07 L17.69 1857.19 L17.21 1857.26 L16.66 1857.29 L16.03 1857.27 L15.17 1857.07 L14.28 1856.93 L13.59 1857.06 L12.99 1857.29 L12.47 1857.62 L12.04 1858.02 L11.70 1858.50 L11.45 1859.03 L11.32 1859.61 L11.30 1860.23 L11.39 1860.87 L11.63 1861.52 L12.19 1862.22 L12.79 1862.87 L13.13 1863.41 L13.38 1863.89 L13.56 1864.35 L13.66 1864.78 L13.70 1865.20 L13.66 1865.62 L13.56 1866.05 L13.38 1866.51 L13.13 1866.99 L12.79 1867.53 L12.19 1868.18 L11.63 1868.88 L11.39 1869.53 L11.30 1870.17 L11.32 1870.79 L11.45 1871.37 L11.70 1871.90 L12.04 1872.38 L12.47 1872.78 L12.99 1873.11 L13.59 1873.34 L14.28 1873.47 L15.17 1873.33 L16.03 1873.13 L16.66 1873.11 L17.21 1873.14 L17.69 1873.21 L18.12 1873.33 L18.50 1873.51 L18.85 1873.76 L19.17 1874.07 L19.47 1874.45 L19.77 1874.91 L20.06 1875.46 L20.32 1876.31 L20.65 1877.15 L21.10 1877.68 L21.60 1878.08 L22.15 1878.37 L22.72 1878.54 L23.30 1878.60 L23.88 1878.54 L24.45 1878.37 L25.00 1878.08 L25.50 1877.68 L25.95 1877.15 L26.28 1876.31 L26.54 1875.46 L26.83 1874.91 L27.13 1874.45 L27.43 1874.07 L27.75 1873.76 L28.10 1873.51 L28.48 1873.33 L28.91 1873.21 L29.39 1873.14 L29.94 1873.11 L30.57 1873.13 L31.43 1873.33 L32.32 1873.47 L33.01 1873.34 L33.61 1873.11 L34.13 1872.78 L34.56 1872.38 L34.90 1871.90 L35.15 1871.37 L35.28 1870.79 L35.30 1870.17 L35.21 1869.53 L34.97 1868.88 L34.41 1868.18 L33.81 1867.53 L33.47 1866.99 L33.22 1866.51 L33.04 1866.05 L32.94 1865.62 Z" stroke-width="2.2"/><circle cx="23.3" cy="1865.2" r="4.2"/></g><g fill="none" stroke="#f1f1f1" stroke-width="2.1" stroke-linecap="round" stroke-linejoin="round"><rect x="11" y="1915.3" width="25" height="20" rx="2.5"/></g></svg>
<svg style="left:367.5px;top:250.5px" width="20" height="20" viewBox="0 0 20 20"><circle cx="10" cy="10" r="8.6" fill="none" stroke="#aaa" stroke-width="1.5"/><path d="M8.3 8.2 H10.4 V14" fill="none" stroke="#aaa" stroke-width="1.6"/><path d="M8.2 14 H12" stroke="#aaa" stroke-width="1.4"/><circle cx="10.2" cy="5.6" r="1" fill="#aaa"/></svg>
<svg style="left:367.5px;top:1425.5px" width="20" height="20" viewBox="0 0 20 20"><circle cx="10" cy="10" r="8.6" fill="none" stroke="#aaa" stroke-width="1.5"/><path d="M8.3 8.2 H10.4 V14" fill="none" stroke="#aaa" stroke-width="1.6"/><path d="M8.2 14 H12" stroke="#aaa" stroke-width="1.4"/><circle cx="10.2" cy="5.6" r="1" fill="#aaa"/></svg>
<svg style="left:1458px;top:1494px" width="22" height="22" viewBox="0 0 22 22"><path d="M10.6 2.2 L19.3 19.6 H1.9 Z" fill="none" stroke="#e0e0e0" stroke-width="1.6" stroke-linejoin="round"/><path d="M10.6 7.6 V15.2" stroke="#e0e0e0" stroke-width="1.3"/><circle cx="10.6" cy="16.9" r="0.8" fill="#e0e0e0"/></svg>
<div class="a" style="left:305px;top:0px;width:1615px;height:96px;background:#282828;z-index:6;"></div>
<div class="a" style="left:0px;top:4.8px;width:1920px;height:5.4px;background:linear-gradient(#222222 0%,#232323 45%,#282828 100%);z-index:6;"></div>
<div class="a" style="left:303.2px;top:5px;width:2px;height:92px;background:#393939;z-index:6;"></div>
<div class="a" style="left:305px;top:95.8px;width:1615px;height:1.6px;background:#3a3a3a;z-index:6;"></div>
<div class="a" style="left:305px;top:97.4px;width:1615px;height:3px;background:linear-gradient(rgba(0,0,0,0.13),rgba(0,0,0,0));z-index:6;"></div>
<div class="a" style="left:345.70px;top:51.27px;font-size:19.4px;line-height:25px;color:#aaaaaa;letter-spacing:-0.419px;-webkit-text-stroke:0.3px #aaa;z-index:6;">Overview</div>
<div class="a" style="left:476.80px;top:51.27px;font-size:19.4px;line-height:25px;color:#aaaaaa;letter-spacing:-0.278px;-webkit-text-stroke:0.3px #aaa;z-index:6;">Content</div>
<div class="a" style="left:594.80px;top:51.27px;font-size:19.4px;line-height:25px;color:#f1f1f1;letter-spacing:-0.237px;-webkit-text-stroke:0.6px #fff;z-index:6;">Audience</div>
<div class="a" style="left:727.30px;top:51.27px;font-size:19.4px;line-height:25px;color:#aaaaaa;letter-spacing:-0.360px;-webkit-text-stroke:0.3px #aaa;z-index:6;">Trends</div>
<div class="a" style="left:594px;top:92px;width:78px;height:4px;background:#ffffff;z-index:6;"></div>
<div class="a" style="left:1616.50px;top:24.02px;font-size:15.8px;line-height:21px;color:#aaaaaa;letter-spacing:-0.182px;-webkit-text-stroke:0.3px #aaa;z-index:6;">Jan 16, 2015 – Dec 20, 2025</div>
<div class="a" style="left:1616.50px;top:47.00px;font-size:20.2px;line-height:26px;color:#f1f1f1;letter-spacing:-0.216px;-webkit-text-stroke:0.2px #f1f1f1;z-index:6;">Lifetime</div>
<svg style="z-index:6;left:1879px;top:44px" width="20" height="12" viewBox="0 0 20 12"><path d="M2 2 L10 10 L18 2" fill="none" stroke="#fff" stroke-width="2.4"/></svg>
</body></html>
